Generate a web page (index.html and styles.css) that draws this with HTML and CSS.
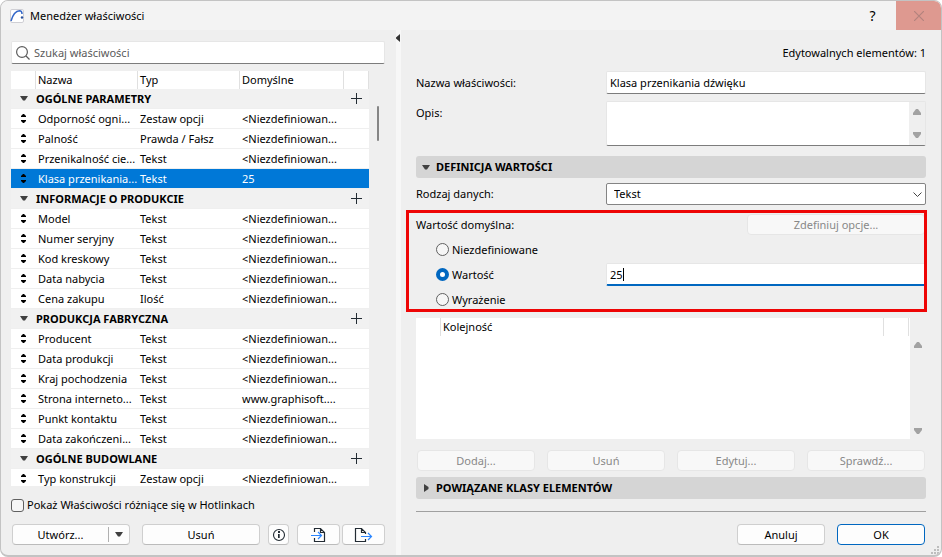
FILE: index.html
```html
<!DOCTYPE html>
<html lang="pl">
<head>
<meta charset="utf-8">
<title>Menedżer właściwości</title>
<link rel="stylesheet" href="styles.css">
</head>
<body>
<svg class="defs" aria-hidden="true">
  <symbol id="sort" viewBox="0 0 7 9"><path d="M3 0h1l2 2v1H1V2zM1 6h5v1L4 9H3L1 7z"/></symbol>
  <symbol id="down" viewBox="0 0 8 5"><path d="M0 0h8L5 4.500H3z"/></symbol>
  <symbol id="right" viewBox="0 0 5 8"><path d="M0 0 4.500 3v2L0 8z"/></symbol>
  <symbol id="up" viewBox="0 0 8 6"><path d="M3 0h2l3 4v2H0V4z"/></symbol>
  <symbol id="plus" viewBox="0 0 11 11"><path d="M5 0h1v5h5v1H6v5H5V6H0V5h5z"/></symbol>
</svg>
<main class="window">
  <header class="titlebar">
    <svg class="app" viewBox="0 0 14 14"><rect x=".5" y=".5" width="13" height="13" rx="1.500" fill="#fff" stroke="#cfcfd4"/><path d="M1 12C2.500 7 5 2 9.500 1.800c1.800 0 2.500.8 2.500 3.200" fill="none" stroke="#3568c8" stroke-width="1.500"/><circle cx="12" cy="8.500" r="1.200" fill="#28509c"/></svg>
    <h1>Menedżer właściwości</h1>
    <button class="help" type="button">?</button>
    <button class="close" type="button" aria-label="Zamknij"><svg viewBox="0 0 10 10"><path d="M0 0 10 10M10 0 0 10" fill="none" stroke="#b3837e" stroke-width="1.200"/></svg></button>
  </header>
  <div class="panes">
    <section class="left">
      <label class="field search">
        <svg viewBox="0 0 14 14"><circle cx="6" cy="6" r="5.400"/><path d="m10 10 3.500 3.500"/></svg>
        <input type="text" placeholder="Szukaj właściwości" aria-label="Szukaj właściwości">
      </label>
      <div class="list">
        <div class="clip">
        <table>
          <colgroup><col class="c-sort"><col class="c-name"><col class="c-type"><col class="c-def"><col class="c-add"></colgroup>
          <thead><tr><th></th><th>Nazwa</th><th>Typ</th><th>Domyślne</th><th></th></tr></thead>
          <tbody>
            <tr class="group"><td><svg class="tri"><use href="#down"/></svg></td><th colspan="3">OGÓLNE PARAMETRY</th><td><button type="button" aria-label="Dodaj"><svg><use href="#plus"/></svg></button></td></tr>
            <tr><td><svg class="sort"><use href="#sort"/></svg></td><td>Odporność ogni...</td><td>Zestaw opcji</td><td colspan="2">&lt;Niezdefiniowan...</td></tr>
            <tr><td><svg class="sort"><use href="#sort"/></svg></td><td>Palność</td><td>Prawda / Fałsz</td><td colspan="2">&lt;Niezdefiniowan...</td></tr>
            <tr><td><svg class="sort"><use href="#sort"/></svg></td><td>Przenikalność cie...</td><td>Tekst</td><td colspan="2">&lt;Niezdefiniowan...</td></tr>
            <tr class="selected"><td><svg class="sort"><use href="#sort"/></svg></td><td>Klasa przenikania...</td><td>Tekst</td><td colspan="2">25</td></tr>
          </tbody>
          <tbody>
            <tr class="group"><td><svg class="tri"><use href="#down"/></svg></td><th colspan="3">INFORMACJE O PRODUKCIE</th><td><button type="button" aria-label="Dodaj"><svg><use href="#plus"/></svg></button></td></tr>
            <tr><td><svg class="sort"><use href="#sort"/></svg></td><td>Model</td><td>Tekst</td><td colspan="2">&lt;Niezdefiniowan...</td></tr>
            <tr><td><svg class="sort"><use href="#sort"/></svg></td><td>Numer seryjny</td><td>Tekst</td><td colspan="2">&lt;Niezdefiniowan...</td></tr>
            <tr><td><svg class="sort"><use href="#sort"/></svg></td><td>Kod kreskowy</td><td>Tekst</td><td colspan="2">&lt;Niezdefiniowan...</td></tr>
            <tr><td><svg class="sort"><use href="#sort"/></svg></td><td>Data nabycia</td><td>Tekst</td><td colspan="2">&lt;Niezdefiniowan...</td></tr>
            <tr><td><svg class="sort"><use href="#sort"/></svg></td><td>Cena zakupu</td><td>Ilość</td><td colspan="2">&lt;Niezdefiniowan...</td></tr>
          </tbody>
          <tbody>
            <tr class="group"><td><svg class="tri"><use href="#down"/></svg></td><th colspan="3">PRODUKCJA FABRYCZNA</th><td><button type="button" aria-label="Dodaj"><svg><use href="#plus"/></svg></button></td></tr>
            <tr><td><svg class="sort"><use href="#sort"/></svg></td><td>Producent</td><td>Tekst</td><td colspan="2">&lt;Niezdefiniowan...</td></tr>
            <tr><td><svg class="sort"><use href="#sort"/></svg></td><td>Data produkcji</td><td>Tekst</td><td colspan="2">&lt;Niezdefiniowan...</td></tr>
            <tr><td><svg class="sort"><use href="#sort"/></svg></td><td>Kraj pochodzenia</td><td>Tekst</td><td colspan="2">&lt;Niezdefiniowan...</td></tr>
            <tr><td><svg class="sort"><use href="#sort"/></svg></td><td>Strona interneto...</td><td>Tekst</td><td colspan="2">www.graphisoft....</td></tr>
            <tr><td><svg class="sort"><use href="#sort"/></svg></td><td>Punkt kontaktu</td><td>Tekst</td><td colspan="2">&lt;Niezdefiniowan...</td></tr>
            <tr><td><svg class="sort"><use href="#sort"/></svg></td><td>Data zakończeni...</td><td>Tekst</td><td colspan="2">&lt;Niezdefiniowan...</td></tr>
          </tbody>
          <tbody>
            <tr class="group"><td><svg class="tri"><use href="#down"/></svg></td><th colspan="3">OGÓLNE BUDOWLANE</th><td><button type="button" aria-label="Dodaj"><svg><use href="#plus"/></svg></button></td></tr>
            <tr><td><svg class="sort"><use href="#sort"/></svg></td><td>Typ konstrukcji</td><td>Zestaw opcji</td><td colspan="2">&lt;Niezdefiniowan...</td></tr>
          </tbody>
        </table>
        </div>
        <div class="thumb"></div>
      </div>
      <label class="check"><input type="checkbox">Pokaż Właściwości różniące się w Hotlinkach</label>
      <div class="tools">
        <div class="btn split"><button type="button">Utwórz...</button><button class="more" type="button" aria-label="Więcej"><svg class="tri"><use href="#down"/></svg></button></div>
        <button class="btn wide" type="button">Usuń</button>
        <button class="btn info" type="button" aria-label="Informacje"><svg width="14" height="14" viewBox="0 0 14 14"><circle cx="7" cy="7" r="5.500" fill="none" stroke="#222b33" stroke-width="1.100"/><path d="M6 3h2v2H6zM6 6h1.700v4H6z" fill="#222b33"/></svg></button>
        <button class="btn io" type="button" aria-label="Importuj"><svg width="17" height="16" viewBox="0 0 17 16" fill="none" stroke-width="1.200"><path d="M4.500 5V1.500h6l4 4v9h-10V11M10.500 1.500v4h4" stroke="#222b33"/><path d="M1 8.500h10M8 5l3.500 3.500L8 12" stroke="#2b86ff"/></svg></button>
        <button class="btn io" type="button" aria-label="Eksportuj"><svg width="19" height="16" viewBox="0 0 19 16" fill="none" stroke-width="1.200"><path d="M11.500 7V5.500l-4-4h-6v13h10V12M7.500 1.500v4h4" stroke="#222b33"/><path d="M7 9.500h10.500M14 6l3.500 3.500L14 13" stroke="#2b86ff"/></svg></button>
      </div>
    </section>
    <div class="splitter"><svg viewBox="0 0 4 8"><path d="M4 0v8L0 4.500v-1z"/></svg></div>
    <section class="right">
      <p class="count">Edytowalnych elementów: 1</p>
      <div class="row name"><label for="name">Nazwa właściwości:</label><div class="field"><input id="name" type="text" value="Klasa przenikania dźwięku"></div></div>
      <div class="row desc"><label for="desc">Opis:</label><div class="field area"><textarea id="desc"></textarea><div class="bar"><svg class="arrow"><use href="#up"/></svg><svg class="arrow flip"><use href="#up"/></svg></div></div></div>
      <h2><svg class="tri"><use href="#down"/></svg>DEFINICJA WARTOŚCI</h2>
      <div class="row kind"><label for="kind">Rodzaj danych:</label><div class="select"><select id="kind"><option>Tekst</option></select><svg viewBox="0 0 9 5"><path d="m.5.5 4 4 4-4"/></svg></div></div>
      <fieldset>
        <div class="head"><span>Wartość domyślna:</span><button class="btn define" type="button" disabled>Zdefiniuj opcje...</button></div>
        <div class="row"><label class="radio"><input type="radio" name="value">Niezdefiniowane</label></div>
        <div class="row"><label class="radio"><input type="radio" name="value" checked>Wartość</label><div class="field active"><input type="text" value="25" aria-label="Wartość" size="1"><span class="caret"></span></div></div>
        <div class="row"><label class="radio"><input type="radio" name="value">Wyrażenie</label></div>
      </fieldset>
      <div class="order">
        <div class="sheet"><div class="cols"><span></span><span>Kolejność</span><span></span></div></div>
        <div class="bar"><svg class="arrow"><use href="#up"/></svg><svg class="arrow flip"><use href="#up"/></svg></div>
      </div>
      <div class="actions">
        <button class="btn" type="button" disabled>Dodaj...</button><button class="btn" type="button" disabled>Usuń</button><button class="btn" type="button" disabled>Edytuj...</button><button class="btn" type="button" disabled>Sprawdź...</button>
      </div>
      <h2><svg class="tri side"><use href="#right"/></svg>POWIĄZANE KLASY ELEMENTÓW</h2>
      <hr>
      <div class="confirm"><button class="btn" type="button">Anuluj</button><button class="btn ok" type="button">OK</button></div>
    </section>
  </div>
  <svg class="grip" viewBox="0 0 8 8"><path d="M6 0h2v2H6zM3 3h2v2H3zM6 3h2v2H6zM0 6h2v2H0zM3 6h2v2H3zM6 6h2v2H6z"/></svg>
</main>
</body>
</html>
```
FILE: styles.css
```css
* { box-sizing: border-box; }
body { margin: 0; background: #fff; color: #000; font: 11px/16px "Noto Sans", "Open Sans", sans-serif; }
button, input, select, textarea { font: inherit; color: inherit; margin: 0; padding: 0; border: 0; background: none; outline: 0; border-radius: 0; }
h1, h2, p, fieldset { margin: 0; padding: 0; border: 0; font-size: inherit; }
svg { display: block; flex: none; }
.defs { display: none; }

.window { position: relative; min-height: 100vh; display: flex; flex-direction: column; border: 1px solid #c3c3c3; border-bottom-width: 2px; border-radius: 8px; background: #efefef; overflow: hidden; }
.titlebar { display: flex; align-items: center; height: 29px; background: #f3f3f3; }
.app { width: 14px; height: 14px; margin: 0 6px 0 9px; }
h1 { flex: 1; font-weight: 400; }
.help { width: 47px; height: 29px; font-size: 14px; }
.close { width: 45px; height: 29px; background: #de9990; display: grid; place-items: center; }
.close svg { width: 10px; height: 10px; }

.panes { flex: 1; display: grid; grid-template-columns: minmax(0, 395fr) 5px minmax(0, 540fr); }
.left { padding: 11px 11px 10px 10px; display: flex; flex-direction: column; }
.splitter { position: relative; background: #f7f7f7; }
.splitter svg { position: absolute; left: 0; top: 4px; width: 4px; height: 8px; fill: #333; }

.field { display: flex; align-items: center; height: 23px; background: #fff; border: 1px solid #e6e6e6; border-bottom-color: #7c7c7c; border-radius: 2px; }
.field input { flex: 1; min-width: 0; height: 20px; padding-left: 3px; }
.search svg { width: 14px; height: 14px; margin-left: 4px; fill: none; stroke: #5c5c5c; stroke-width: 1.2; }
.search input { padding-left: 4px; }
.search input::placeholder { color: #5a5a5a; opacity: 1; }

.list { flex: 1; display: flex; margin-top: 7px; padding-right: 16px; position: relative; }
.clip { flex: 1; height: 415px; overflow: hidden; }
table { width: 100%; table-layout: fixed; border-collapse: separate; border-spacing: 0; background: #fff; }
.c-sort { width: 25px; }
.c-name, .c-type { width: 102px; }
.c-add { width: 25px; }
th, td { height: 20px; padding: 0 0 0 2px; text-align: left; font-weight: 400; line-height: 18px; white-space: nowrap; border-bottom: 1px solid #efefef; }
thead th { height: 18px; border: 0; border-right: 1px solid #e0e0e0; }
td:first-child { padding: 0 0 0 9px; }
.sort { width: 7px; height: 9px; }
.tri { width: 8px; height: 5px; fill: #404040; }
.group { background: #f1f1f1; }
.group th { font-weight: 700; padding-left: 0; }
.group button { display: block; padding: 0 5px; }
.group button svg { width: 11px; height: 11px; fill: #222b33; }
.selected { background: #0078d7; color: #fff; }
.selected svg { fill: #000; }
.thumb { position: absolute; right: 6px; top: 35px; width: 2px; height: 35px; background: #858585; border-radius: 1px; }

.check { display: flex; align-items: center; gap: 3px; margin: 10px 0 11px; }
.check input { appearance: none; width: 13px; height: 13px; border: 1px solid #606060; border-radius: 3px; background: #f6f6f6; }
.tools { display: flex; padding-left: 1px; }
.btn { height: 21px; border: 1px solid #cfcfcf; border-bottom-color: #bbb; border-radius: 4px; background: #fdfdfd; text-align: center; line-height: 18px; }
.btn:disabled { color: #888; background: #f8f8f8; border-color: #e6e6e6; }
.btn svg { margin: 0 auto; }
.split { display: flex; flex: 1; margin-right: 12px; }
.split button { flex: 1; line-height: 18px; }
.split .more { flex: 0 0 21px; border-left: 1px solid #b0b0b0; height: 15px; margin-top: 2px; }
.wide { flex: 1; margin-right: 8px; }
.info { width: 21px; margin-right: 8px; }
.io { width: 43px; }
.io + .io { margin-left: 2px; }

.right { padding: 15px 15px 9px; display: flex; flex-direction: column; }
.count { text-align: right; }
.row { display: grid; grid-template-columns: minmax(0, 190fr) minmax(0, 320fr); align-items: center; }
.name { margin-top: 10px; }
.desc { margin: 7px 0 10px; align-items: start; }
.desc label { padding-top: 4px; }
.area { height: 45px; align-items: stretch; }
.area textarea { flex: 1; min-width: 0; resize: none; }
.bar { width: 16px; display: flex; flex-direction: column; justify-content: space-between; align-items: center; padding: 7px 0; background: #efefef; }
.arrow { width: 8px; height: 6px; fill: #a2a2a2; }
.flip { transform: rotate(180deg); }
h2 { display: flex; align-items: center; height: 22px; padding-left: 6px; gap: 6px; background: #d5d5d5; border-radius: 3px; font-weight: 700; }
.side { width: 5px; height: 8px; margin: 0 1px 0 2px; }
.kind { margin-top: 5px; }
.select { position: relative; }
.select select { appearance: none; display: block; width: 100%; height: 22px; padding-left: 7px; background: #fff; border: 1px solid #848484; border-radius: 2px; }
.select svg { position: absolute; right: 4px; top: 9px; width: 9px; height: 5px; fill: none; stroke: #444; pointer-events: none; }

fieldset { position: relative; margin-top: 9px; }
fieldset::after { content: ""; position: absolute; inset: -4px -1px 0 -10px; border: 3px solid #ee0505; pointer-events: none; }
.head { display: flex; justify-content: space-between; height: 23px; padding-right: 1px; }
.define { width: 178px; }
.head span { line-height: 22px; }
fieldset .row { height: 25px; }
.radio { display: flex; align-items: center; gap: 3px; padding-left: 20px; }
.radio input { appearance: none; width: 13px; height: 13px; border: 1px solid #606060; border-radius: 50%; background: #f6f6f6; }
.radio input:checked { border: 4px solid #0067c0; background: #fff; }
.active { border-bottom: 2px solid #0067c0; position: relative; }
.caret { position: absolute; left: 16px; top: 4px; width: 1px; height: 13px; background: #000; }

.order { display: flex; margin-top: 6px; height: 121px; }
.sheet { flex: 1; background: #fff; }
.order .bar { padding: 24px 0 5px; }
.cols { display: flex; height: 18px; line-height: 18px; }
.cols span { border-right: 1px solid #e0e0e0; width: 25px; }
.cols span:nth-child(2) { flex: 1; padding-left: 2px; }
.cols span:last-child { margin-right: 1px; }
.actions { display: grid; grid-template-columns: repeat(4, 1fr); gap: 12px; margin: 11px 0 6px; padding: 0 1px; }
hr { width: 100%; margin: 12px 0; border: 0; border-top: 1px solid #a0a0a0; }
.confirm { display: flex; justify-content: flex-end; gap: 12px; padding-right: 1px; }
.confirm .btn { width: 88px; }
.confirm .ok { border-color: #0067c0; }
.grip { position: absolute; right: 2px; bottom: 1px; width: 8px; height: 8px; fill: #bdbdbd; }
```
